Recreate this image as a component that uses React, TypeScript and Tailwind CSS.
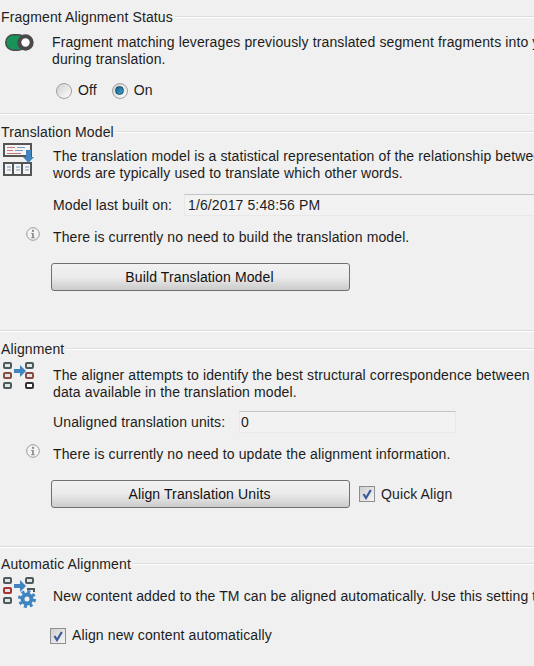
import type { ReactNode } from 'react'

function SectionTitle({ title }: { title: string }) {
  return (
    <div className="flex items-center h-[16px] pl-[1px]">
      <span className="shrink-0 pr-[2px] text-[#222]">{title}</span>
      <div className="flex-1 h-[2px] border-t border-[#dcdcdc] border-b-white border-b" />
    </div>
  )
}

function Divider({ className }: { className: string }) {
  return <div className={`h-[2px] border-t border-[#dcdcdc] border-b border-b-white ${className}`} />
}

function InfoIcon() {
  return (
    <svg width="16" height="16" viewBox="0 0 16 16" className="shrink-0">
      <circle cx="8" cy="8" r="6.3" fill="#f4f4f4" stroke="#9a9a9a" strokeWidth="1" />
      <rect x="7" y="3.8" width="2" height="2" fill="#8a8a8a" />
      <path d="M6.2 7h2.6v4.3h1v1H6.1v-1h1V8H6.2z" fill="#8a8a8a" />
    </svg>
  )
}

function Radio({ checked, label }: { checked?: boolean; label: string }) {
  return (
    <div className="flex items-center gap-[6px]">
      <div className="size-[16px] rounded-full border border-[#a0a0a0] bg-gradient-to-br from-[#d0d0d0] to-white flex items-center justify-center">
        {checked && <div className="size-[9px] rounded-full bg-gradient-to-br from-[#0f5f85] to-[#3fa9d6] border border-[#124a66]" />}
      </div>
      <span>{label}</span>
    </div>
  )
}

function Check({ label }: { label: string }) {
  return (
    <div className="flex items-center gap-[6px]">
      <div className="size-[16px] border border-[#8e8e8e] bg-gradient-to-br from-[#cfcfcf] to-[#f6f6f6] flex items-center justify-center">
        <svg width="12" height="12" viewBox="0 0 12 12">
          <path d="M2.5 6 5 10 9.8 2" fill="none" stroke="#3a5a9c" strokeWidth="2.2" />
        </svg>
      </div>
      <span>{label}</span>
    </div>
  )
}

function Btn({ children }: { children: ReactNode }) {
  return (
    <div className="w-[299px] h-[28px] shrink-0 pr-[2px] rounded-[3px] border border-[#707070] bg-gradient-to-b from-[#f2f2f2] via-[#ebebeb] to-[#cbcbcb] flex items-center justify-center text-[#111]">
      {children}
    </div>
  )
}

function Row({ children, className }: { children: ReactNode; className: string }) {
  return <div className={`flex items-center whitespace-nowrap ${className}`}>{children}</div>
}

function MiniBox({ x, y, c, fill = '#dfe6e6' }: { x: number; y: number; c: string; fill?: string }) {
  return <rect x={x} y={y} width="7" height="5" rx="1" fill={fill} stroke={c} strokeWidth="2" />
}

export default function App() {
  return (
    <div className="w-[534px] h-[666px] overflow-hidden bg-[#f0f0f0] text-[14px] leading-[17px] tracking-[0.12px] text-[#1c1c1c] font-['Liberation_Sans',sans-serif]">
      <div className="pt-[9px]">
        <SectionTitle title="Fragment Alignment Status" />
        <div className="flex mt-[9px]">
          <div className="w-[52px] shrink-0 pl-[5px]">
            <svg width="29" height="17" viewBox="0 0 29 17">
              <rect x="0.75" y="0.75" width="20" height="15.5" rx="7.7" fill="#18935a" stroke="#4a4a4a" strokeWidth="1.5" />
              <circle cx="20.5" cy="8.5" r="6.2" fill="#fff" stroke="#4a4a4a" strokeWidth="4" />
            </svg>
          </div>
          <div className="whitespace-nowrap">
            <div>Fragment matching leverages previously translated segment fragments into your</div>
            <div>during translation.</div>
          </div>
        </div>
        <Row className="mt-[14px] ml-[56px] gap-[15px]">
          <Radio label="Off" />
          <Radio checked label="On" />
        </Row>
      </div>

      <Divider className="mt-[14px] mb-[9px]" />

      <div>
        <SectionTitle title="Translation Model" />
        <div className="flex mt-[1px]">
          <div className="w-[53px] shrink-0 pl-[3px] pt-[2px]">
            <svg width="33" height="33" viewBox="0 0 33 33">
              <rect x="1" y="1" width="27" height="12" fill="#f4f4f4" stroke="#555" strokeWidth="2" />
              <path d="M4 4.5h8M4 7.5h6M4 10.5h14" stroke="#c77" strokeWidth="1.2" />
              <path d="M14 4.5h8M12 7.5h8" stroke="#79b" strokeWidth="1.2" />
              <rect x="1" y="20" width="27" height="12" fill="#f4f4f4" stroke="#555" strokeWidth="2" />
              <path d="M10 20v12M19 20v12" stroke="#555" strokeWidth="2" />
              <path d="M4 24h4M4 27h4M13 24h4M13 27h4M22 24h4M22 27h4" stroke="#79b" strokeWidth="1.2" />
              <path d="M23 7h5v7h3l-5.500 6-5.500-6h3z" fill="#3f83c1" />
            </svg>
          </div>
          <div className="whitespace-nowrap pt-[7px]">
            <div>The translation model is a statistical representation of the relationship between</div>
            <div>words are typically used to translate which other words.</div>
          </div>
        </div>
        <Row className="mt-[12px] ml-[53px]">
          <span className="w-[131px] shrink-0">Model last built on:</span>
          <div className="w-[360px] shrink-0 h-[22px] pl-[3px] flex items-center bg-[#f2f2f2] border border-[#e8e8e8] border-t-[#c4c4c4]">1/6/2017 5:48:56 PM</div>
        </Row>
        <Row className="mt-[13px]">
          <div className="w-[53px] shrink-0 pl-[25px] -mt-[7px]"><InfoIcon /></div>
          <span>There is currently no need to build the translation model.</span>
        </Row>
        <div className="mt-[17px] ml-[51px]"><Btn>Build Translation Model</Btn></div>
      </div>

      <Divider className="mt-[39px] mb-[9px]" />

      <div>
        <SectionTitle title="Alignment" />
        <div className="flex mt-[1px]">
          <div className="w-[53px] shrink-0 pl-[3px] pt-[4px]">
            <svg width="33" height="28" viewBox="0 0 33 28">
              <MiniBox x={1} y={1} c="#4d5a5c" />
              <MiniBox x={1} y={11} c="#8a4a44" />
              <MiniBox x={1} y={21} c="#4d5a5c" />
              <MiniBox x={23} y={1} c="#4d5a5c" />
              <MiniBox x={23} y={11} c="#8a4a44" />
              <MiniBox x={23} y={21} c="#333" fill="#fff" />
              <path d="M11 7h6V3l6 6-6 6v-4h-6z" fill="#3f83c1" />
            </svg>
          </div>
          <div className="whitespace-nowrap pt-[9px]">
            <div>The aligner attempts to identify the best structural correspondence between</div>
            <div>data available in the translation model.</div>
          </div>
        </div>
        <Row className="mt-[10px] ml-[53px]">
          <span className="w-[186px] shrink-0">Unaligned translation units:</span>
          <div className="w-[217px] shrink-0 h-[22px] pl-[1px] flex items-center bg-[#f2f2f2] border border-[#e8e8e8] border-t-[#c4c4c4]">0</div>
        </Row>
        <Row className="mt-[13px]">
          <div className="w-[53px] shrink-0 pl-[25px] -mt-[7px]"><InfoIcon /></div>
          <span>There is currently no need to update the alignment information.</span>
        </Row>
        <Row className="mt-[17px] ml-[51px] gap-[9px]">
          <Btn>Align Translation Units</Btn>
          <Check label="Quick Align" />
        </Row>
      </div>

      <Divider className="mt-[38px] mb-[8px]" />

      <div>
        <SectionTitle title="Automatic Alignment" />
        <div className="flex mt-[1px]">
          <div className="w-[53px] shrink-0 pl-[3px] pt-[4px]">
            <svg width="34" height="32" viewBox="0 0 34 32">
              <MiniBox x={1} y={1} c="#4d5a5c" />
              <MiniBox x={1} y={11} c="#a33" />
              <MiniBox x={1} y={21} c="#4d5a5c" />
              <MiniBox x={23} y={1} c="#4d5a5c" />
              <path d="M24 12h7v3" fill="none" stroke="#4d5a5c" strokeWidth="2" />
              <path d="M11 7h6V3l6 6-6 6v-4h-6z" fill="#3f83c1" />
              <circle cx="24" cy="22" r="4.500" fill="none" stroke="#3f83c1" strokeWidth="4" />
              <circle cx="24" cy="22" r="7.500" fill="none" stroke="#3f83c1" strokeWidth="3" strokeDasharray="3 2.900" />
            </svg>
          </div>
          <div className="whitespace-nowrap pt-[15px]">New content added to the TM can be aligned automatically. Use this setting to</div>
        </div>
        <div className="mt-[18px] ml-[50px]"><Check label="Align new content automatically" /></div>
      </div>
    </div>
  )
}
